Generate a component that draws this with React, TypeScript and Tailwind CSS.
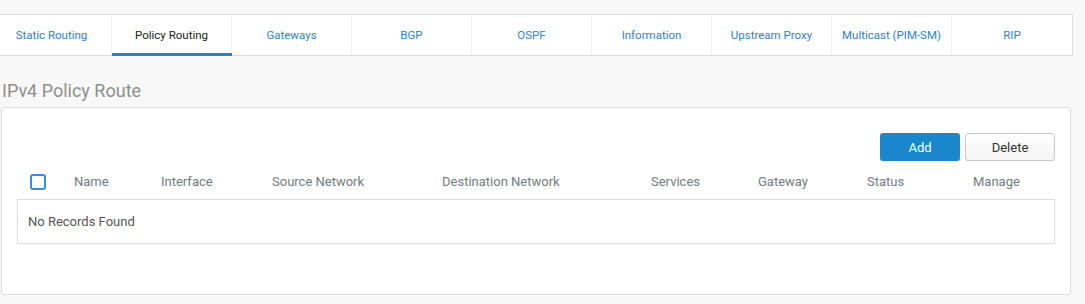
import { useState } from "react";

const tabs = [
    "Static Routing",
    "Policy Routing",
    "Gateways",
    "BGP",
    "OSPF",
    "Information",
    "Upstream Proxy",
    "Multicast (PIM-SM)",
    "RIP",
];

const columns = [
    "Name",
    "Interface",
    "Source Network",
    "Destination Network",
    "Services",
    "Gateway",
    "Status",
    "Manage",
];

export default function App() {
    const [active, setActive] = useState("Policy Routing");
    const [checked, setChecked] = useState(false);

    return (
        <div className="min-h-[304px] w-[1085px] overflow-hidden bg-[#f8f8f8] pt-[14px] font-['Roboto','Liberation_Sans',sans-serif]">
            <nav className="ml-[-8px] flex h-[42px] w-[1081px] border-y border-r border-[#dcdcdc] bg-white">
                {tabs.map((tab, i) => (
                    <button
                        key={tab}
                        onClick={() => setActive(tab)}
                        className={`relative flex h-full w-[120px] items-center justify-center pt-[1px] text-[11.5px] ${
                            i < tabs.length - 1 ? "border-r border-[#f1f1f1]" : ""
                        } ${active === tab ? "text-[#1b1b1b]" : "text-[#2f7fc9]"}`}
                    >
                        {tab}
                        {active === tab && (
                            <span className="absolute bottom-[-1px] left-0 right-[-1px] h-[3px] bg-[#1a87d0]" />
                        )}
                    </button>
                ))}
            </nav>

            <h2 className="mt-[22px] mb-[3px] pl-[2px] text-[18px] leading-[26px] text-[#8e8e8e]">
                IPv4 Policy Route
            </h2>

            <section className="ml-[1px] w-[1070px] rounded-[3px] border border-[#dcdcdc] bg-white px-[15px] pt-[25px] pb-[50px]">
                <div className="flex justify-end gap-[5px]">
                    <button className="h-[28px] w-[80px] rounded-[3px] bg-[#1a87cd] pt-[1px] text-[13px] text-white">
                        Add
                    </button>
                    <button className="h-[28px] w-[90px] rounded-[3px] border border-[#c8c8c8] bg-gradient-to-b from-white to-[#f4f4f4] pt-[1px] text-[13px] text-[#333]">
                        Delete
                    </button>
                </div>

                <div className="mt-[3px] grid h-[35px] grid-cols-[57px_87px_111px_170px_209px_107px_109px_106px_1fr] items-center text-[13px] text-[#737b82]">
                    <div className="pl-[13px]">
                        <button
                            onClick={() => setChecked(!checked)}
                            className={`block h-[16px] w-[16px] rounded-[3px] border-2 border-[#3d8ad6] ${
                                checked ? "bg-[#3d8ad6]" : "bg-white"
                            }`}
                        />
                    </div>
                    {columns.map((col) => (
                        <div key={col}>{col}</div>
                    ))}
                </div>

                <div className="flex h-[45px] items-center border border-[#dcdcdc] px-[10px] text-[13px] text-[#555]">
                    No Records Found
                </div>
            </section>
        </div>
    );
}
